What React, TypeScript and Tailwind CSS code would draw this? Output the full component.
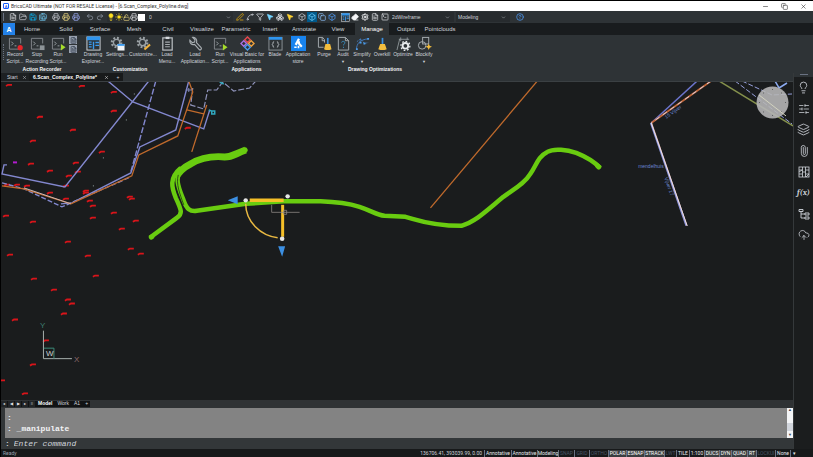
import type { ReactNode } from "react";
import {
  Box, Boxes, ChevronDown, CircleHelp, CloudUpload, Copy, Eraser, FileText, Filter, FolderOpen, Layers,
  Lightbulb, Minus, MousePointer2, Paperclip, PenLine, Printer, Redo2, Save, SaveAll, Settings,
  SlidersHorizontal, Spline, SquareTerminal, Sun, Undo2, Unlock, X,
} from "lucide-react";

const quickTools = [
  { label: "New", className: "text-gray-200", icon: <FileText size={8} /> },
  { label: "Open", className: "text-gray-300", icon: <FolderOpen size={8} /> },
  { label: "Save", className: "text-sky-400", icon: <Save size={8} /> },
  { label: "Save as", className: "text-sky-300", icon: <SaveAll size={8} /> },
];

const printTools = [
  { label: "Print", className: "text-gray-300", icon: <Printer size={8} /> },
  { label: "Preview", className: "text-amber-200", icon: <Printer size={8} /> },
  { label: "Publish", className: "text-indigo-300", icon: <Printer size={8} /> },
];

const undoTools = [
  { label: "Undo", className: "text-gray-400", icon: <Undo2 size={8} /> },
  { label: "Redo", className: "text-gray-400", icon: <Redo2 size={8} /> },
];

const entityTools = [
  { label: "Match", className: "text-amber-400", icon: <PenLine size={8} /> },
  { label: "Polyline", className: "text-gray-300", icon: <Spline size={8} /> },
  { label: "Filter", className: "text-gray-200", icon: <Filter size={8} /> },
  { label: "Isolate", className: "text-sky-300", icon: <MousePointer2 size={8} fill="currentColor" /> },
  { label: "Hide", className: "text-gray-200", icon: <Boxes size={8} /> },
  { label: "Show", className: "text-amber-300", icon: <MousePointer2 size={8} fill="currentColor" /> },
];

const viewTools = [
  { label: "Wireframe", className: "text-gray-300", icon: <Box size={8} /> },
  { label: "Shaded", className: "text-sky-300 bg-sky-800", icon: <Box size={8} /> },
  { label: "Hidden", className: "text-blue-300", icon: <Copy size={8} /> },
  { label: "Realistic", className: "text-blue-400", icon: <Box size={8} /> },
];

const panelTools = [
  { label: "Explorer", className: "text-sky-400", icon: <ExplorerIcon size={9} /> },
  { label: "Clean", className: "text-gray-100", icon: <Eraser size={8} fill="currentColor" /> },
  { label: "Options", className: "text-gray-100", icon: <Settings size={8} strokeWidth={3} /> },
  { label: "Report", className: "text-gray-200", icon: <FileText size={8} /> },
  { label: "Console", className: "text-gray-200", icon: <SquareTerminal size={8} /> },
];

type Tool = { label: string; className: string; icon: ReactNode };

function ToolGroup({ tools }: { tools: Tool[] }) {
  return (
    <div className="flex">
      {tools.map(t => (
        <button key={t.label} aria-label={t.label} className={`flex h-2.5 w-2.5 items-center justify-center ${t.className}`}>
          {t.icon}
        </button>
      ))}
    </div>
  );
}

function ExplorerIcon({ size = 15 }: { size?: number }) {
  return (
    <svg width={size} height={size} viewBox="0 0 16 16" fill="none">
      <rect x="1" y="1" width="14" height="14" stroke="#d5dade" />
      <path d="M1 2.500h14" stroke="#2f95ee" strokeWidth="4" />
      <path d="M3 6.500h3M3 9h3M3 11.500h3" stroke="#3a9bf0" strokeWidth="1.300" />
      <path d="M8 6v8M10 7h4M10 10h4" stroke="#3a9bf0" strokeWidth="1.500" />
    </svg>
  );
}

function ScriptIcon({ kind }: { kind: "record" | "stop" | "run" }) {
  return (
    <svg width="15" height="15" viewBox="0 0 16 16" fill="none">
      <path d="M12 14H1.500V2.500h12V8" stroke="#82888c" />
      <path d="M3.500 6l2 2-2 2M7 10.500h2" stroke="#9da3a7" />
      {kind === "record" && <circle cx="13" cy="12.500" r="2.800" fill="#e5262a" />}
      {kind === "stop" && <rect x="10.500" y="10" width="5" height="5" fill="#8d9498" />}
      {kind === "run" && <path d="M10.500 8.500l5 3.500-5 3.500z" fill="#a6dd2c" />}
    </svg>
  );
}

function GearIcon({ accent }: { accent: "window" | "pencil" }) {
  return (
    <svg width="15" height="15" viewBox="0 0 16 16" fill="none">
      <circle cx="7" cy="7" r="5" stroke="#9aa1a5" strokeWidth="2.400" strokeDasharray="2 1.900" />
      <circle cx="7" cy="7" r="3.400" stroke="#9aa1a5" strokeWidth="1.500" />
      {accent === "window" ? (
        <g>
          <rect x="8" y="8.500" width="7.500" height="7" fill="#f2f5f8" />
          <rect x="8" y="8.500" width="7.500" height="2" fill="#3a9bf0" />
        </g>
      ) : (
        <path d="M9 14.500l6-5.500" stroke="#efb13c" strokeWidth="2.200" />
      )}
    </svg>
  );
}

function ClipboardIcon() {
  return (
    <svg width="15" height="15" viewBox="0 0 16 16" fill="none">
      <rect x="3" y="2" width="10" height="13" stroke="#b9bec2" strokeWidth="1.300" />
      <path d="M6 2h4" stroke="#d5dade" strokeWidth="2.500" />
      <path d="M5.500 6.500h5M5.500 9h5M5.500 11.500h5" stroke="#a5abaf" strokeWidth="1.200" />
    </svg>
  );
}

function WrenchIcon() {
  return (
    <svg width="15" height="15" viewBox="0 0 16 16" fill="none" stroke="#a8aeb2" strokeWidth="1.200">
      <path d="M5 1.500L7.500 4 7 6.500 4.500 7 2 4.500C1.500 7.500 4 10 7 9l5 5.500c1 1 3-.5 2-2L9 7C10 4 8 1 5 1.500z" />
    </svg>
  );
}

function BasicIcon() {
  return (
    <svg width="15" height="15" viewBox="0 0 16 16" fill="none" strokeWidth="1.500">
      <path d="M8 1l3 3-3 3-3-3z" stroke="#e5484d" />
      <path d="M4 5l3 3-3 3-3-3z" stroke="#a970e0" />
      <path d="M12 5l3 3-3 3-3-3z" stroke="#efa13c" />
      <path d="M8 9l3 3-3 3-3-3z" stroke="#4b9bea" />
    </svg>
  );
}

function BladeIcon() {
  return (
    <svg width="15" height="15" viewBox="0 0 16 16" fill="none">
      <rect x="1" y="1.500" width="14" height="13.500" stroke="#8d9498" />
      <path d="M1 2.500h14" stroke="#2f95ee" strokeWidth="3" />
      <path d="M6.500 6c-2 0-.5 2.500-2 3 1.500.5 0 3 2 3M9.500 6c2 0 .5 2.500 2 3-1.500.5 0 3-2 3" stroke="#b9bec2" />
    </svg>
  );
}

function StoreIcon() {
  return (
    <svg width="15" height="15" viewBox="0 0 16 16" fill="none">
      <rect width="16" height="16" fill="#1883ee" />
      <path d="M8.500 3L5 9.500" stroke="#fff" strokeWidth="2.400" />
      <path d="M8.500 5.500v2.500l3 3.500" stroke="#fff" strokeWidth="2.200" />
      <path d="M3.500 12h2.500M8 10.500v2.500" stroke="#fff" strokeWidth="1.800" />
    </svg>
  );
}

function Broom() {
  return (
    <g>
      <path d="M11.500 2v7" stroke="#3a8fe0" strokeWidth="1.800" />
      <path d="M9 8.500h5l1.500 5.500q-4 2-8 0z" fill="#f2bd3e" />
    </g>
  );
}

function PurgeIcon() {
  return (
    <svg width="15" height="15" viewBox="0 0 16 16" fill="none">
      <path d="M7 12H1.500V1.500H6L8 4v3M5.500 1.500V5H8" stroke="#a8aeb2" />
      <Broom />
    </svg>
  );
}

function AuditIcon() {
  return (
    <svg width="15" height="15" viewBox="0 0 16 16" fill="none">
      <path d="M2.500 1.500H10L13.500 5v10h-11zM10 1.500V5h3.500" stroke="#a8aeb2" />
      <path d="M6 7c0-2 4-1.500 3.500.5C9.300 8.500 8 8.500 8 10M8 11.500v1.200" stroke="#3a8fc0" />
    </svg>
  );
}

function SimplifyIcon() {
  return (
    <svg width="15" height="15" viewBox="0 0 16 16" fill="none">
      <path d="M1.500 14C2 8 5 4 14 3" stroke="#4379b7" />
      <path d="M2 6l4-3 4 5 4-1M6 3l-1 5" stroke="#4379b7" strokeDasharray="2 1" />
      <path d="M1 13h2v2H1zM5 6h2v2H5zM13 2h2v2h-2zM9 7h2v2H9z" fill="#4a9be8" />
    </svg>
  );
}

function OverkillIcon() {
  return (
    <svg width="15" height="15" viewBox="0 0 16 16" fill="none">
      <path d="M8 2v7" stroke="#3a8fe0" strokeWidth="1.800" />
      <path d="M5.500 8.500h5L12.500 14q-4.500 2-9 0z" fill="#f2bd3e" />
    </svg>
  );
}

function OptimizeIcon() {
  return (
    <svg width="15" height="15" viewBox="0 0 16 16" fill="none">
      <path d="M1 15L4 3M3 3.500h11M5 1.500v4M12 1.500v3" stroke="#8d9498" />
      <circle cx="10" cy="10.500" r="3" stroke="#e8ebed" strokeWidth="2" />
      <circle cx="10" cy="10.500" r="4.800" stroke="#e8ebed" strokeWidth="1.400" strokeDasharray="1.800 1.900" />
    </svg>
  );
}

function BlockifyIcon() {
  return (
    <svg width="15" height="15" viewBox="0 0 16 16" fill="none">
      <rect x="6" y="1.500" width="6.500" height="7" stroke="#a8aeb2" />
      <circle cx="5.500" cy="10" r="4" stroke="#a8aeb2" />
      <path d="M12.500 8l1 2.500 2.500 1-2.500 1-1 2.500-1-2.500-2.500-1 2.500-1z" fill="#f2bd3e" />
    </svg>
  );
}

type RibbonItem = { lines: string[]; width: string; icon: ReactNode; menu?: boolean };
type RibbonGroup = { title: string; width: string; items: RibbonItem[]; extra?: boolean };

const ribbonGroups: RibbonGroup[] = [
  {
    title: "Action Recorder",
    width: "w-[76px]",
    extra: true,
    items: [
      { lines: ["Record", "Script..."], width: "w-[22px]", icon: <ScriptIcon kind="record" /> },
      { lines: ["Stop", "Recording"], width: "w-[22px]", icon: <ScriptIcon kind="stop" /> },
      { lines: ["Run", "Script..."], width: "w-[20px]", icon: <ScriptIcon kind="run" /> },
    ],
  },
  {
    title: "Customization",
    width: "w-[100px]",
    items: [
      { lines: ["Drawing", "Explorer..."], width: "w-[26px]", icon: <ExplorerIcon /> },
      { lines: ["Settings..."], width: "w-[22px]", icon: <GearIcon accent="window" /> },
      { lines: ["Customize..."], width: "w-[30px]", icon: <GearIcon accent="pencil" /> },
      { lines: ["Load", "Menu..."], width: "w-[18px]", icon: <ClipboardIcon /> },
    ],
  },
  {
    title: "Applications",
    width: "w-[133px]",
    items: [
      { lines: ["Load", "Application..."], width: "w-[30px]", icon: <WrenchIcon /> },
      { lines: ["Run", "Script..."], width: "w-[20px]", icon: <ScriptIcon kind="run" /> },
      { lines: ["Visual Basic for", "Applications"], width: "w-[34px]", icon: <BasicIcon /> },
      { lines: ["Blade"], width: "w-[22px]", icon: <BladeIcon /> },
      { lines: ["Application", "store"], width: "w-[24px]", icon: <StoreIcon /> },
    ],
  },
  {
    title: "Drawing Optimizations",
    width: "w-[124px]",
    items: [
      { lines: ["Purge"], width: "w-[22px]", icon: <PurgeIcon /> },
      { lines: ["Audit"], width: "w-[16px]", icon: <AuditIcon />, menu: true },
      { lines: ["Simplify"], width: "w-[22px]", icon: <SimplifyIcon />, menu: true },
      { lines: ["Overkill"], width: "w-[18px]", icon: <OverkillIcon /> },
      { lines: ["Optimize"], width: "w-[24px]", icon: <OptimizeIcon /> },
      { lines: ["Blockify"], width: "w-[18px]", icon: <BlockifyIcon />, menu: true },
    ],
  },
];

const ribbonTabs = [
  "Home", "Solid", "Surface", "Mesh", "Civil", "Visualize", "Parametric",
  "Insert", "Annotate", "View", "Manage", "Output", "Pointclouds",
];

const statusItems = [
  { name: "Annotative", width: "w-[27px]", state: "on" },
  { name: "Annotative", width: "w-[26px]", state: "on" },
  { name: "Modeling", width: "w-[21px]", state: "on" },
  { name: "SNAP", width: "w-[16px]", state: "off" },
  { name: "GRID", width: "w-[15px]", state: "off" },
  { name: "ORTHO", width: "w-[19px]", state: "off" },
  { name: "POLAR", width: "w-[18px]", state: "lit" },
  { name: "ESNAP", width: "w-[18px]", state: "lit" },
  { name: "STRACK", width: "w-[20px]", state: "lit" },
  { name: "LWT", width: "w-[12px]", state: "off" },
  { name: "TILE", width: "w-[13px]", state: "on" },
  { name: "1:100", width: "w-[15px]", state: "on" },
  { name: "DUCS", width: "w-[15px]", state: "lit" },
  { name: "DYN", width: "w-[12px]", state: "lit" },
  { name: "QUAD", width: "w-[16px]", state: "lit" },
  { name: "RT", width: "w-[9px]", state: "lit" },
  { name: "LOCKUI", width: "w-[19px]", state: "off" },
  { name: "None", width: "w-[15px]", state: "on" },
  { name: "▾", width: "w-[8px]", state: "on" },
];

const marks = [
  [8, 85], [81, 86], [113, 92], [113, 111], [39, 117], [72, 130], [32, 141], [101, 152], [30, 164], [75, 163],
  [77, 172], [49, 171], [68, 176], [65, 186], [16, 185], [26, 186], [6, 185], [49, 193], [65, 199], [85, 191],
  [89, 201], [92, 206], [129, 197], [131, 199], [113, 213], [92, 218], [135, 221], [121, 229], [5, 216],
  [32, 222], [67, 242], [187, 128], [9, 255], [87, 256], [130, 249], [140, 254], [33, 279], [95, 276], [53, 290],
  [67, 300], [71, 304], [63, 314], [14, 320], [45, 341], [32, 365], [1, 381], [24, 394], [85, 193],
];

function Drawing() {
  return (
    <svg viewBox="0 82 793 318" className="block w-full bg-[#1a1c1d]" fill="none" role="img" aria-label="Drawing">
      {marks.map(([x, y]) => (
        <path key={`${x}-${y}`} d={`M${x - 3} ${y + 1}l2-1.200h4`} stroke="#d9141a" strokeWidth="1.800" />
      ))}
      <path d="M12 162.500h4" stroke="#b31bd0" strokeWidth="2" />

      {/* parcel outlines */}
      <g stroke="#8388cf" strokeWidth="1.400">
        <path d="M107 81l25 21 71 27 6-19" />
        <path d="M148 81L64 187 1 174l2-9h3" />
        <path d="M188 81l-13 49-36 17-9 26-59 30-11 1" />
        <path d="M155 81l-25 91" strokeDasharray="6 2" />
        <path d="M1 183l22 6 38 18 69-30" strokeDasharray="5 2" />
      </g>
      <path d="M192 88l-2 17 13 4 4-19h9l6-8 11 9 16-3 7-8" stroke="#8f93ba" strokeWidth="1.200" strokeDasharray="6 2" />
      <g stroke="#c06a2c" strokeWidth="1.300">
        <path d="M188 81l4 11-15 44-39 19-7 21-61 28-47-15-22-3" />
        <path d="M186 110l17 4M206 105l-15 47" />
        <path d="M537 81L430 208" />
      </g>
      <path d="M70 204l-47-16" stroke="#cbb6b4" />
      <path d="M208 110l3 1v3h3v-3h-3M219 82l4 2" stroke="#31a9c0" strokeWidth="1.500" />
      <path d="M185 90h6M188 88v4" stroke="#7f86b4" />
      <path d="M133 94h1M125 120h1M102 158h1M92 186h1" stroke="#9aa6a8" />

      {/* right side outlines */}
      <path d="M697 81l-46 42" stroke="#6b74cc" strokeWidth="1.500" />
      <path d="M711 81l-60 42" stroke="#c4683a" strokeWidth="1.800" />
      <path d="M711 81l-60 42" stroke="#d8cfe0" strokeDasharray="5 4" />
      <path d="M650.500 123l35.500 103" stroke="#8c94dc" strokeWidth="1.500" />
      <path d="M651.500 123l35.500 103" stroke="#d9a79a" strokeWidth="1" />
      <path d="M651 123l36 103" stroke="#e4e0f0" strokeWidth="1" />
      <path d="M719 81l74 45" stroke="#84904c" strokeWidth="1.500" />
      <path d="M735 81l57 43M742 81l30 14 20-1" stroke="#98a1dd" strokeDasharray="5 2" />
      <path d="M775 81l4 7M779 88l8-5" stroke="#8caaf0" strokeWidth="1.500" />
      <g fill="#6a86d0" fontFamily="Liberation Sans, sans-serif" fontSize="5">
        <text x="638" y="168">mendelhuis</text>
        <text transform="translate(666 119) rotate(-35)">15 Vijver</text>
        <text transform="translate(664 178) rotate(70)">Vijver 17</text>
      </g>
      <circle cx="772.500" cy="102.500" r="16" fill="#b5b5b6" fillOpacity=".9" />
      <path
        d="M759 102.500h1M785 102.500h1M772 89.500h1M772 115.500h1M763 93h1M781 93h1M763 112h1M781 112h1"
        stroke="#5d5f60"
      />
      <path d="M759 95l27 21" stroke="#d3d3c0" />

      {/* selected polyline */}
      <g stroke="#69cc10" strokeLinejoin="round">
        <path d="M245 150C234 154 232 157 224 157C212 156 201 157 190 164C182 168 178 172 175 178" strokeWidth="7" />
        <path d="M180 168C168 178 171 188 175 198C181 211 182 214 176 218L149 238" strokeWidth="4.500" />
        <path
          d="M181 168C173 178 178 188 183 201C186 209 189 212 196 211L245 204L283 201.500L320 201.500C335 202 346 203 359 207C371 211 376 215 384 216L405 217L412 219C432 225 449 226 461 226C475 222 486 211 503 197C514 189 524 184 530 174C536 166 537 157 547 152C554 148 567 150 576 153C586 157 593 161 600 168"
          strokeWidth="4.500"
        />
        <path d="M239 152.500l5.500-2.500M151 237l-.5.300M597.500 166l1 1" strokeWidth="5" strokeLinecap="round" />
      </g>
      <path d="M177.500 175C175 184 179 194 183 205" stroke="#1d3a12" strokeWidth=".8" />

      {/* manipulator */}
      <path d="M249 200.500h34" stroke="#f5bf28" strokeWidth="3.500" />
      <path d="M282 205v32" stroke="#f5bf28" strokeWidth="3" />
      <path d="M245 204C245 222 260 236 277 238" stroke="#e9b942" strokeWidth="1.500" />
      <path d="M227 200.500l10-4v8zM281.500 257l-4-10.500h7z" fill="#3c8fe2" />
      <circle cx="245" cy="200.500" r="2.200" fill="#e6e6e6" />
      <circle cx="287" cy="196.500" r="2.200" fill="#e6e6e6" />
      <circle cx="281.500" cy="239" r="2.300" fill="#e6e6e6" />
      <path d="M271 205v7.500h28M283 210.500h3v4h-3z" stroke="#8b8583" strokeWidth=".8" />

      {/* coordinate system marker */}
      <path d="M42.500 331v28H71" stroke="#a8b0ae" />
      <path d="M43 348.500h10V359" stroke="#3b8c78" />
      <g fontFamily="Liberation Sans, sans-serif" fontSize="8">
        <text x="39" y="328" fill="#3f7d70">Y</text>
        <text x="45" y="356.500" fill="#c6cccb">W</text>
        <text x="73" y="362" fill="#8d6a6c">X</text>
      </g>
    </svg>
  );
}

const panels = [
  { label: "Tips", icon: <Lightbulb size={13} strokeWidth={1.5} /> },
  { label: "Properties", icon: <SlidersHorizontal size={12} strokeWidth={1.5} /> },
  { label: "Layers", icon: <Layers size={13} strokeWidth={1.5} /> },
  { label: "Attachments", icon: <Paperclip size={12} strokeWidth={1.5} className="-rotate-45" /> },
  { label: "Hatches", icon: <HatchIcon /> },
  { label: "Parameters", icon: <span className="font-serif text-[8px] leading-none font-bold italic">f(x)</span> },
  { label: "Structure", icon: <StructureIcon /> },
  { label: "Cloud", icon: <CloudUpload size={12} strokeWidth={1.5} /> },
];

function HatchIcon() {
  return (
    <svg width="12" height="12" viewBox="0 0 12 12" fill="none" stroke="currentColor" strokeWidth=".8">
      <rect x="1" y="1" width="10" height="10" />
      <path d="M4.500 1v10M7.500 1v10M1 4h3.500M1 8h3.500M4.500 6h3M7.500 4H11M7.500 8H11M1 6l3-2M8 11l3-3" />
    </svg>
  );
}

function StructureIcon() {
  return (
    <svg width="12" height="12" viewBox="0 0 12 12" fill="none" stroke="currentColor" strokeWidth=".9">
      <path d="M1 1.500h4v2H1zM7 5h4v2H7zM7 9h4v2H7zM3 3.500V10h4M3 6h4" />
    </svg>
  );
}

function Sidebar() {
  return (
    <aside className="flex w-5 shrink-0 flex-col items-center border-l border-[#35393b] bg-[#1b1d1e] text-gray-300">
      <div className="h-1 w-full bg-[#2e3336]">
        <div className="mx-auto mt-px h-px w-2 bg-gray-500" />
      </div>
      {panels.map(p => (
        <button key={p.label} aria-label={p.label} className="flex h-[21px] w-full items-center justify-center">
          {p.icon}
        </button>
      ))}
    </aside>
  );
}

function CommandLine() {
  return (
    <div className="bg-[#333739] font-['Liberation_Mono',monospace] text-[8px]">
      <div className="ml-1 flex h-[30px] bg-[#838383] text-gray-100">
        <div className="flex-1 pt-1 pl-0.5 leading-[11px] font-bold">
          <p>:</p>
          <p className="whitespace-pre">: _manipulate</p>
        </div>
        <div className="flex w-1.5 flex-col items-center justify-between bg-gray-100 text-[4px] leading-[5px] text-gray-700">
          <span>▲</span>
          <span className="mt-2 h-2 w-full bg-gray-300" />
          <span>▼</span>
        </div>
      </div>
      <label className="flex h-[11px] items-center gap-1 pl-1 text-gray-200">
        <span>:</span>
        <input
          type="text"
          aria-label="Command"
          placeholder="Enter command"
          className="h-[11px] flex-1 bg-transparent italic outline-none placeholder:text-gray-300"
        />
      </label>
    </div>
  );
}

export default function App() {
  return (
    <div className="flex min-h-screen flex-col overflow-hidden bg-black pt-px pl-px font-['Liberation_Sans',Arial,sans-serif] text-[5px] leading-[7px] text-gray-300">
      <header className="flex h-[10px] items-center bg-white pl-0.5 text-[#333]">
        <span className="mr-0.5 flex h-1.5 w-1.5 items-center justify-center rounded-[1px] border border-blue-600 text-[4px] text-blue-700">A</span>
        <h1 className="flex-1 font-['Roboto',sans-serif]">BricsCAD Ultimate (NOT FOR RESALE License) - [6.Scan_Complex_Polyline.dwg]</h1>
        <div className="flex gap-3 pr-1.5">
          <button aria-label="Minimize"><Minus size={7} /></button>
          <button aria-label="Restore"><Copy size={7} /></button>
          <button aria-label="Close"><X size={7} /></button>
        </div>
      </header>

      <div className="flex h-3 items-center bg-[#2e3336]">
        <div className="mr-1 ml-0.5 h-2 w-px bg-gray-500" />
        <ToolGroup tools={quickTools} />
        <div className="w-[3px]" />
        <ToolGroup tools={printTools} />
        <div className="w-1" />
        <ToolGroup tools={undoTools} />
        <div className="ml-0.5 flex h-2.5 w-[126px] items-center bg-[#2a2e31] pr-0.5">
          <Lightbulb size={8} className="text-yellow-300" fill="currentColor" />
          <Sun size={8} className="text-yellow-300" fill="currentColor" />
          <Unlock size={7} className="text-amber-200" />
          <Printer size={8} className="text-gray-200" />
          <span className="mr-1 h-[7px] w-[7px] bg-white" />
          <select aria-label="Layer" className="flex-1 appearance-none bg-transparent">
            <option>0</option>
          </select>
          <ChevronDown size={5} />
        </div>
        <div className="w-0.5" />
        <ToolGroup tools={entityTools} />
        <div className="w-0.5" />
        <ToolGroup tools={viewTools} />
        <div className="w-[3px]" />
        <ToolGroup tools={panelTools} />
        <div className="flex h-2.5 w-16 items-center bg-[#272b2e] pr-1 pl-0.5">
          <select aria-label="Visual style" className="flex-1 appearance-none bg-transparent">
            <option>2dWireframe</option>
          </select>
          <ChevronDown size={5} />
        </div>
        <div className="ml-0.5 flex h-2.5 w-[54px] items-center bg-[#272b2e] pr-1 pl-0.5">
          <select aria-label="Workspace" className="flex-1 appearance-none bg-transparent">
            <option>Modeling</option>
          </select>
          <ChevronDown size={5} />
        </div>
        <button aria-label="Help" className="ml-1.5 text-blue-400"><CircleHelp size={8} /></button>
      </div>

      <nav className="flex h-3 items-center bg-[#191c1e] text-[6px]">
        <button aria-label="Application menu" className="ml-0.5 flex h-3 w-3 items-center justify-center bg-[#2381e8] text-[7px] font-bold text-white">
          A
        </button>
        {ribbonTabs.map(t => (
          <button
            key={t}
            className={`flex h-3 w-[34px] items-center justify-center whitespace-nowrap ${t === "Manage" ? "bg-[#2e3336] text-white" : ""}`}
          >
            {t}
          </button>
        ))}
      </nav>

      <section className="flex h-[38px] bg-[#2e3336] pt-px">
        <div className="mt-2 h-4 w-[3px] border-r border-dotted border-gray-500" />
        {ribbonGroups.map(g => (
          <div key={g.title} className={`flex shrink-0 flex-col ${g.width}`}>
            <div className="flex h-[30px]">
              {g.items.map(item => (
                <button key={item.lines.join(" ")} className={`flex shrink-0 flex-col items-center ${item.width}`}>
                  {item.icon}
                  {item.lines.map(line => (
                    <span key={line} className="whitespace-nowrap">{line}</span>
                  ))}
                  {item.menu && <span className="text-[4px]">▼</span>}
                </button>
              ))}
              {g.extra && (
                <div className="flex flex-col items-center gap-px pl-px">
                  <button aria-label="Insert message" className="flex h-2 w-2 items-center justify-center bg-gray-400 text-gray-800"><FileText size={7} /></button>
                  <button aria-label="Insert pause" className="flex h-2 w-2 items-center justify-center bg-gray-400 text-gray-800"><FileText size={7} /></button>
                </div>
              )}
            </div>
            <h2 className="text-center font-bold whitespace-nowrap text-gray-100">{g.title}</h2>
          </div>
        ))}
      </section>

      <div className="flex flex-1 bg-[#1a1c1d]">
        <main className="flex min-w-0 flex-1 flex-col">
          <div className="flex h-[9px] items-center border-b border-[#3b4043] bg-[#2e3336]">
            <button className="flex h-2 w-[28px] items-center justify-between bg-[#1d2022] pr-0.5 pl-1.5">
              Start <X size={5} />
            </button>
            <button className="flex h-2 w-[80px] items-center justify-between bg-[#181a1b] pl-1 font-bold whitespace-nowrap text-white">
              6.Scan_Complex_Polyline* <X size={5} />
            </button>
            <button aria-label="New drawing" className="flex h-2 w-3.5 items-center justify-center bg-[#181a1b] pl-1">+</button>
          </div>

          <Drawing />

          <div className="flex h-2 items-center bg-[#2f3234]">
            <div className="flex h-1.5 items-center gap-px bg-[#121314]">
              {["◂", "◀", "▶", "▸", "≡"].map(s => (
                <button key={s} className="flex h-1.5 w-1.5 items-center justify-center bg-[#222527] text-[4px] text-gray-200">{s}</button>
              ))}
              <button className="pr-0.5 pl-0.5 font-bold text-white">Model</button>
              <button className="px-0.5">Work</button>
              <button className="px-0.5">A1</button>
              <button className="px-0.5">+</button>
            </div>
          </div>

          <CommandLine />
        </main>
        <Sidebar />
      </div>

      <footer className="flex h-[9px] items-center bg-[#17191a] pr-[15px] font-['Roboto',sans-serif]">
        <span className="flex-1 pl-0.5 text-gray-400">Ready</span>
        <span className="pr-0.5">136706.41, 393039.99, 0.00</span>
        {statusItems.map((s, i) => (
          <button
            key={i}
            className={`flex h-[7px] items-center justify-center overflow-hidden border-l border-gray-500 whitespace-nowrap ${s.width} ${
              s.state === "off" ? "text-gray-600" : s.state === "lit" ? "bg-[#3a3e40] text-white" : "text-gray-200"
            }`}
          >
            {s.name}
          </button>
        ))}
      </footer>
    </div>
  );
}
